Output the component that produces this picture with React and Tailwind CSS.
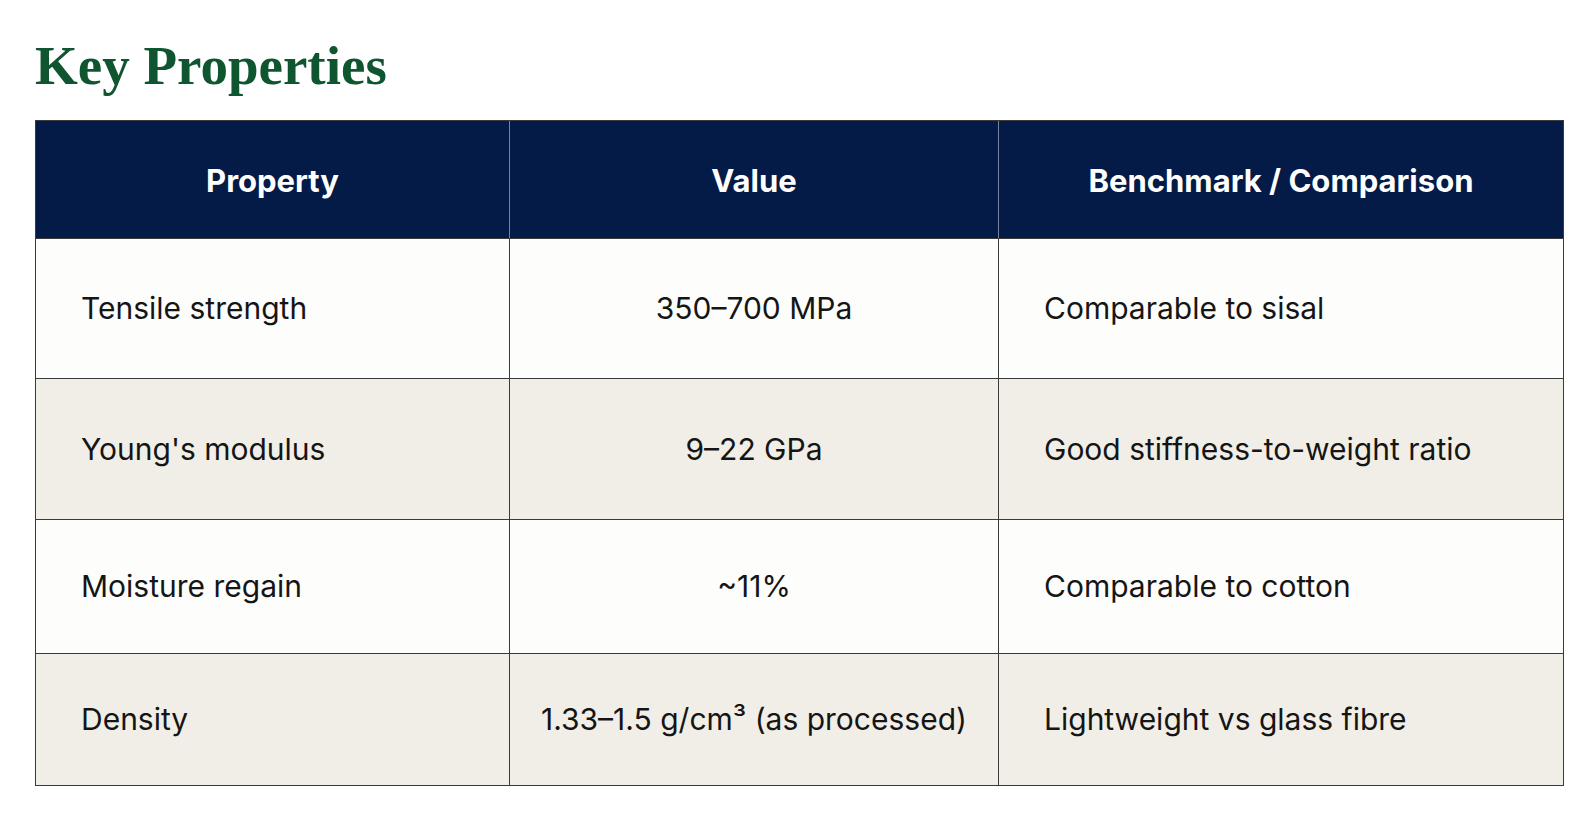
import React from "react";

const rows = [
  { property: "Tensile strength", value: "350–700 MPa", bench: "Comparable to sisal", h: "h-[140px]", bg: "bg-[#fdfdfc]" },
  { property: "Young's modulus", value: "9–22 GPa", bench: "Good stiffness-to-weight ratio", h: "h-[141px]", bg: "bg-[#f1eee7]" },
  { property: "Moisture regain", value: "~11%", bench: "Comparable to cotton", h: "h-[134px]", bg: "bg-[#fdfdfc]" },
  { property: "Density", value: "1.33–1.5 g/cm³ (as processed)", bench: "Lightweight vs glass fibre", h: "h-[132px]", bg: "bg-[#f1eee7]" },
];

const App = () => {
  return (
    <div className="min-h-[813px] w-full bg-white pt-[38px] pl-[35px]">
      {/* Title */}
      <h1 className="text-[55px] leading-none font-bold text-[#0f5630] font-['Liberation_Serif',serif]">
        Key Properties
      </h1>

      {/* Table */}
      <div className="mt-[27px] w-[1529px] border border-[#3a3a3a] font-['Inter',sans-serif]">
        <div className="grid grid-cols-[474px_489px_1fr] h-[117px] bg-[#041a47] text-white font-bold text-[31px]">
          <div className="flex items-center justify-center pt-[3px] border-r border-[#7a8299]">Property</div>
          <div className="flex items-center justify-center pt-[3px] border-r border-[#7a8299]">Value</div>
          <div className="flex items-center justify-center pt-[3px]">Benchmark / Comparison</div>
        </div>

        {rows.map((row) => (
          <div
            key={row.property}
            className={`grid grid-cols-[474px_489px_1fr] border-t border-[#3a3a3a] text-[30px] text-[#151515] ${row.h} ${row.bg}`}
          >
            <div className="flex items-center pl-[45px] border-r border-[#3a3a3a]">{row.property}</div>
            <div className="flex items-center justify-center border-r border-[#3a3a3a]">{row.value}</div>
            <div className="flex items-center pl-[45px]">{row.bench}</div>
          </div>
        ))}
      </div>
    </div>
  );
};

export default App;
